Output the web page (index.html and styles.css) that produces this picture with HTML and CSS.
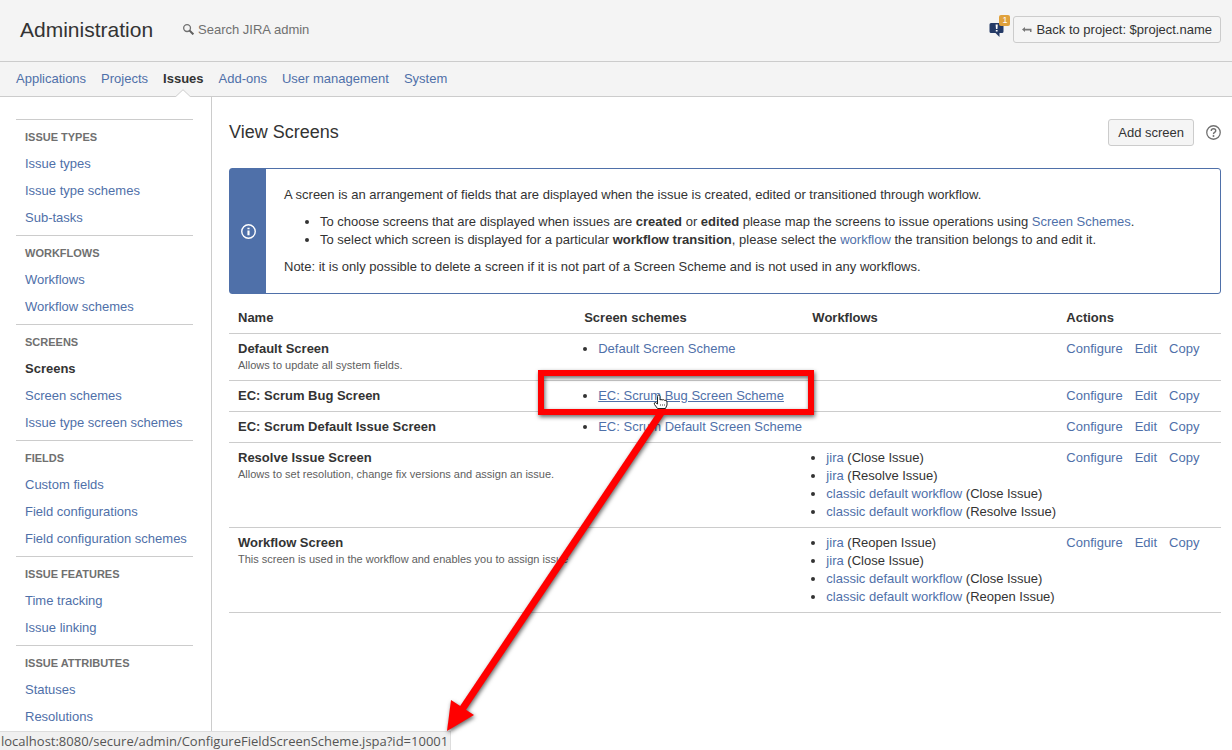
FILE: index.html
```html
<!DOCTYPE html>
<html lang="en">
<head>
<meta charset="utf-8">
<title>View Screens - Administration</title>
<link rel="stylesheet" href="styles.css">
</head>
<body>
<header class="header">
  <h1 class="site-title">Administration</h1>
  <label class="search">
    <svg class="search-icon" viewBox="0 0 10 10" aria-hidden="true"><circle cx="3.700" cy="3.700" r="3.100" fill="none" stroke="#707070" stroke-width="1.200"/><path d="M5.800 5.800L9.400 9.400" stroke="#606060" stroke-width="1.900"/></svg>
    <input class="search-input" type="text" placeholder="Search JIRA admin" aria-label="Search JIRA admin">
  </label>
  <button class="feedback" type="button" aria-label="Feedback">
    <svg class="feedback-icon" viewBox="0 0 16 16" aria-hidden="true"><path d="M2 1h11q1.500 0 1.500 1.500v7q0 1.500-1.500 1.500h-2.500v4l-4-4H2Q.5 11 .5 9.500v-7Q.5 1 2 1z" fill="#243a66"/><path d="M6.600 2.500h2.200l-.4 4.500h-1.400zM6.800 8h1.800v1.600H6.800z" fill="#fff"/></svg>
    <span class="badge">1</span>
  </button>
  <button class="button" type="button"><svg class="back-icon" viewBox="0 0 10 8" aria-hidden="true"><path d="M0 3.500L3 1v1.700H9.500V6H8V4.500H3V6z" fill="#777"/></svg>Back to project: $project.name</button>
</header>
<nav class="nav">
  <a href="#">Applications</a>
  <a href="#">Projects</a>
  <a href="#" class="current">Issues<svg class="notch" viewBox="0 0 16 8" aria-hidden="true"><path d="M0 8L8 .5L16 8z" fill="#fff"/><path d="M0 7.500H.8L8 .7L15.200 7.500H16" fill="none" stroke="#ccc"/></svg></a>
  <a href="#">Add-ons</a>
  <a href="#">User management</a>
  <a href="#">System</a>
</nav>
<div class="page">
  <aside class="sidebar">
    <section class="group"><h2>Issue types</h2><ul><li><a href="#">Issue types</a></li><li><a href="#">Issue type schemes</a></li><li><a href="#">Sub-tasks</a></li></ul></section>
    <section class="group"><h2>Workflows</h2><ul><li><a href="#">Workflows</a></li><li><a href="#">Workflow schemes</a></li></ul></section>
    <section class="group"><h2>Screens</h2><ul><li><a href="#" class="current">Screens</a></li><li><a href="#">Screen schemes</a></li><li><a href="#">Issue type screen schemes</a></li></ul></section>
    <section class="group"><h2>Fields</h2><ul><li><a href="#">Custom fields</a></li><li><a href="#">Field configurations</a></li><li><a href="#">Field configuration schemes</a></li></ul></section>
    <section class="group"><h2>Issue features</h2><ul><li><a href="#">Time tracking</a></li><li><a href="#">Issue linking</a></li></ul></section>
    <section class="group"><h2>Issue attributes</h2><ul><li><a href="#">Statuses</a></li><li><a href="#">Resolutions</a></li></ul></section>
  </aside>
  <main class="content">
    <div class="title-row">
      <h2 class="page-title">View Screens</h2>
      <button class="button" type="button">Add screen</button>
      <a href="#" class="help" aria-label="Help"><svg viewBox="0 0 14 14" aria-hidden="true"><circle cx="7" cy="7" r="6.300" fill="none" stroke="#707070" stroke-width="1.200"/><path d="M4.900 5.500Q4.900 3.500 7 3.500T9.100 5.300Q9.100 6.200 8 6.900T7 8.500" fill="none" stroke="#707070" stroke-width="1.300"/><circle cx="7" cy="10.300" r=".9" fill="#707070"/></svg></a>
    </div>
    <div class="info">
      <div class="info-side"><svg class="info-icon" viewBox="0 0 14 14" aria-hidden="true"><circle cx="7" cy="7" r="6.300" fill="none" stroke="#fff" stroke-width="1.300"/><path d="M6 6h2v4.500H6zM6 3.400h2V5H6z" fill="#fff"/></svg></div>
      <div class="info-body">
        <p>A screen is an arrangement of fields that are displayed when the issue is created, edited or transitioned through workflow.</p>
        <ul>
          <li>To choose screens that are displayed when issues are <strong>created</strong> or <strong>edited</strong> please map the screens to issue operations using <a href="#">Screen Schemes</a>.</li>
          <li>To select which screen is displayed for a particular <strong>workflow transition</strong>, please select the <a href="#">workflow</a> the transition belongs to and edit it.</li>
        </ul>
        <p>Note: it is only possible to delete a screen if it is not part of a Screen Scheme and is not used in any workflows.</p>
      </div>
    </div>
    <table class="screens">
      <colgroup><col class="col-name"><col class="col-schemes"><col class="col-workflows"><col class="col-actions"></colgroup>
      <thead><tr><th>Name</th><th>Screen schemes</th><th>Workflows</th><th>Actions</th></tr></thead>
      <tbody>
        <tr>
          <td><strong>Default Screen</strong><div class="description">Allows to update all system fields.</div></td>
          <td><ul><li><a href="#">Default Screen Scheme</a></li></ul></td>
          <td></td>
          <td><div class="actions"><a href="#">Configure</a><a href="#">Edit</a><a href="#">Copy</a></div></td>
        </tr>
        <tr>
          <td><strong>EC: Scrum Bug Screen</strong></td>
          <td><ul><li><a href="#" class="hovered">EC: Scrum Bug Screen Scheme</a></li></ul></td>
          <td></td>
          <td><div class="actions"><a href="#">Configure</a><a href="#">Edit</a><a href="#">Copy</a></div></td>
        </tr>
        <tr>
          <td><strong>EC: Scrum Default Issue Screen</strong></td>
          <td><ul><li><a href="#">EC: Scrum Default Screen Scheme</a></li></ul></td>
          <td></td>
          <td><div class="actions"><a href="#">Configure</a><a href="#">Edit</a><a href="#">Copy</a></div></td>
        </tr>
        <tr>
          <td><strong>Resolve Issue Screen</strong><div class="description">Allows to set resolution, change fix versions and assign an issue.</div></td>
          <td></td>
          <td><ul><li><a href="#">jira</a> (Close Issue)</li><li><a href="#">jira</a> (Resolve Issue)</li><li><a href="#">classic default workflow</a> (Close Issue)</li><li><a href="#">classic default workflow</a> (Resolve Issue)</li></ul></td>
          <td><div class="actions"><a href="#">Configure</a><a href="#">Edit</a><a href="#">Copy</a></div></td>
        </tr>
        <tr>
          <td><strong>Workflow Screen</strong><div class="description">This screen is used in the workflow and enables you to assign issue</div></td>
          <td></td>
          <td><ul><li><a href="#">jira</a> (Reopen Issue)</li><li><a href="#">jira</a> (Close Issue)</li><li><a href="#">classic default workflow</a> (Close Issue)</li><li><a href="#">classic default workflow</a> (Reopen Issue)</li></ul></td>
          <td><div class="actions"><a href="#">Configure</a><a href="#">Edit</a><a href="#">Copy</a></div></td>
        </tr>
      </tbody>
    </table>
  </main>
</div>
<div class="status">localhost:8080/secure/admin/ConfigureFieldScreenScheme.jspa?id=10001</div>
<svg class="annotation" width="400" height="390" viewBox="440 360 400 390" aria-hidden="true">
  <g class="marker">
    <rect x="541" y="373" width="270" height="39" fill="none" stroke="#f00" stroke-width="6"/>
    <path d="M661 413L461 711" stroke="#f00" stroke-width="7"/>
    <path d="M447 731L451 700L474 715z" fill="#f00"/>
  </g>
  <path d="M657.500 403V396.500Q657.500 395 658.700 395T660 396.500V400Q661 398.800 662 400Q663.500 399 664.300 400.300Q667 399.500 667 402V405L665.500 408.500H657.500L654.500 404.500Q653.500 402.500 655.500 402.500L657.500 404z" fill="#fff" stroke="#222"/>
  <path d="M660.500 404v2M662.500 404v2M664.500 404v2" stroke="#888" stroke-width=".8"/>
</svg>
</body>
</html>
```
FILE: styles.css
```css
* { box-sizing: border-box; }
body {
  margin: 0;
  min-height: 100vh;
  display: flex;
  flex-direction: column;
  background: #fff;
  color: #333;
  font: 13px/18px "Liberation Sans", Arial, sans-serif;
}
h1, h2, p, ul { margin: 0; padding: 0; }
a { color: #4f70a9; text-decoration: none; }
a:hover, .hovered { text-decoration: underline; }
button, input { font: inherit; color: inherit; }

.header {
  display: flex;
  align-items: center;
  height: 62px;
  padding: 0 11px 2px 20px;
  background: #f4f4f4;
  border-bottom: 1px solid #ccc;
}
.site-title { font-size: 21px; line-height: 27px; font-weight: 400; }
.search { display: flex; align-items: center; gap: 4px; margin: 0 auto 0 30px; }
.search-icon { width: 11px; height: 11px; }
.search-input { width: 160px; padding: 0; border: 0; outline: 0; background: none; }
.search-input::placeholder { color: #707070; opacity: 1; }
.feedback { position: relative; width: 21px; height: 24px; margin-right: 3px; padding: 0; border: 0; background: none; }
.feedback-icon { display: block; width: 16px; height: 16px; }
.badge {
  position: absolute;
  top: -3px;
  right: 0;
  width: 11px;
  height: 11px;
  border-radius: 2px;
  background: #e0a13c;
  color: #fff;
  font-size: 9px;
  line-height: 11px;
}
.button {
  display: flex;
  align-items: center;
  height: 27px;
  padding: 0 9px;
  border: 1px solid #ccc;
  border-radius: 3px;
  background: #f5f5f5;
}
.header .button { padding: 0 8px; }
.back-icon { width: 10px; height: 8px; margin-right: 4px; }

.nav {
  display: flex;
  gap: 15px;
  height: 35px;
  padding: 8px 16px;
  background: #f4f4f4;
  border-bottom: 1px solid #ccc;
}
.nav .current { position: relative; color: #333; font-weight: 700; }
.notch { position: absolute; left: 50%; bottom: -9px; width: 16px; height: 8px; margin-left: -8px; }

.page { display: flex; flex: 1; }
.sidebar { flex: none; width: 212px; padding: 22px 18px 0 16px; border-right: 1px solid #ccc; }
.group { padding: 9px 9px 4px; border-top: 1px solid #ccc; white-space: nowrap; }
.group h2 { margin-bottom: 5px; color: #707070; font-size: 11px; line-height: 16px; text-transform: uppercase; }
.group ul { list-style: none; }
.group li { line-height: 27px; }
.group .current { color: #333; font-weight: 700; }

.content { flex: 1; min-width: 0; padding: 22px 11px 0 17px; }
.title-row { display: flex; align-items: center; margin-bottom: 22px; }
.page-title { flex: 1; font-size: 18px; line-height: 27px; font-weight: 400; }
.help { display: flex; width: 15px; height: 15px; margin-left: 12px; }
.info { display: flex; margin-bottom: 9px; border: 1px solid #4f70a9; border-radius: 3px; }
.info-side { display: flex; flex: none; align-items: center; justify-content: center; width: 36px; background: #4f70a9; }
.info-icon { width: 15px; height: 15px; }
.info-body { display: flex; flex-direction: column; gap: 9px; padding: 17px 18px; }
.info-body ul { padding-left: 36px; }

.screens { width: 100%; table-layout: fixed; border-collapse: separate; border-spacing: 0; }
.col-name { width: 34.9%; }
.col-schemes { width: 23%; }
.col-workflows { width: 25.6%; }
.screens th, .screens td { padding: 6px 0 6px 9px; border-bottom: 1px solid #ccc; text-align: left; vertical-align: top; white-space: nowrap; }
.screens ul { padding-left: 14px; }
.description { margin-bottom: 2px; color: #606060; font-size: 11px; line-height: 14px; }
.actions { display: flex; gap: 12px; }

.status {
  position: fixed;
  left: 0;
  bottom: 0;
  padding: 0 2px 0 1px;
  border: 1px solid #ddd;
  border-left: 0;
  border-bottom: 0;
  background: #f0f0f0;
  color: #555;
  font-family: "Open Sans", sans-serif;
  font-size: 13px;
}
.annotation { position: absolute; left: 440px; top: 360px; pointer-events: none; }
.marker { filter: drop-shadow(1px 2px 2px rgba(0, 0, 0, 0.6)); }
```
